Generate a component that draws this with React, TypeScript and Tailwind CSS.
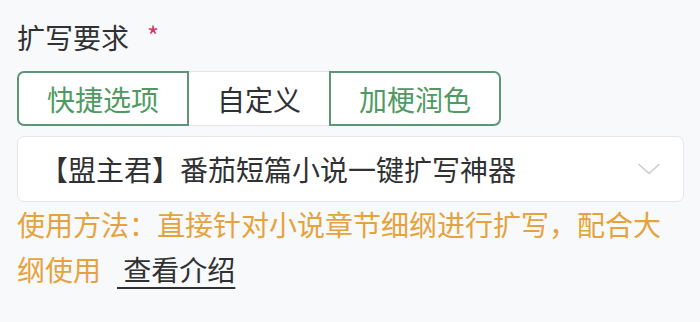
import { useState } from 'react'

const modes = ['快捷选项', '自定义', '加梗润色']

function Chevron() {
  return (
    <svg width="22" height="12" viewBox="0 0 22 12" fill="none" className="shrink-0">
      <path d="M1 1.5 L11 10.5 L21 1.5" stroke="#c8cbd2" strokeWidth="1.6" strokeLinecap="round" strokeLinejoin="round" />
    </svg>
  )
}

export default function App() {
  const [mode] = useState(0)

  return (
    <div
      className="w-[700px] h-[322px] bg-[#f8f9fb] px-[17px] pt-[16px] text-[28px] text-[#303133]"
      style={{ fontFamily: '"Noto Sans CJK SC", "Noto Sans", sans-serif' }}
    >
      {/* Label */}
      <div className="flex items-start h-[42px] leading-[42px]">
        <span>扩写要求</span>
        <span className="ml-[18px] text-[26px] leading-[38px] text-[#d6336c]">*</span>
      </div>

      {/* Mode switch */}
      <div className="mt-[13px] flex h-[55px]">
        {modes.map((m, i) => {
          const green = i === 0 || i === 2
          return (
            <button
              key={m}
              className={
                green
                  ? `h-full px-[28px] border-2 border-[#5d9676] bg-white text-[#4f9a62] leading-none ${
                      i === 0 ? 'rounded-l-[7px]' : 'rounded-r-[7px]'
                    }`
                  : 'h-full px-[28px] border-y border-[#e3e5ea] bg-white text-[#303133] leading-none'
              }
            >
              {m}
            </button>
          )
        })}
      </div>

      {/* Select */}
      <div className="mt-[10px] w-[667px] h-[66px] flex items-center justify-between pl-[22px] pr-[23px] bg-white border border-[#e4e6eb] rounded-[7px]">
        <span className="leading-none">【盟主君】番茄短篇小说一键扩写神器</span>
        <Chevron />
      </div>

      {/* Help */}
      <div className="leading-[45px] text-[#e6a23c]">
        使用方法：直接针对小说章节细纲进行扩写，配合大纲使用
        <a className="ml-[16px] text-[#303133] underline underline-offset-[6px] decoration-[1.5px] cursor-pointer">
          &nbsp;查看介绍
        </a>
      </div>
    </div>
  )
}
